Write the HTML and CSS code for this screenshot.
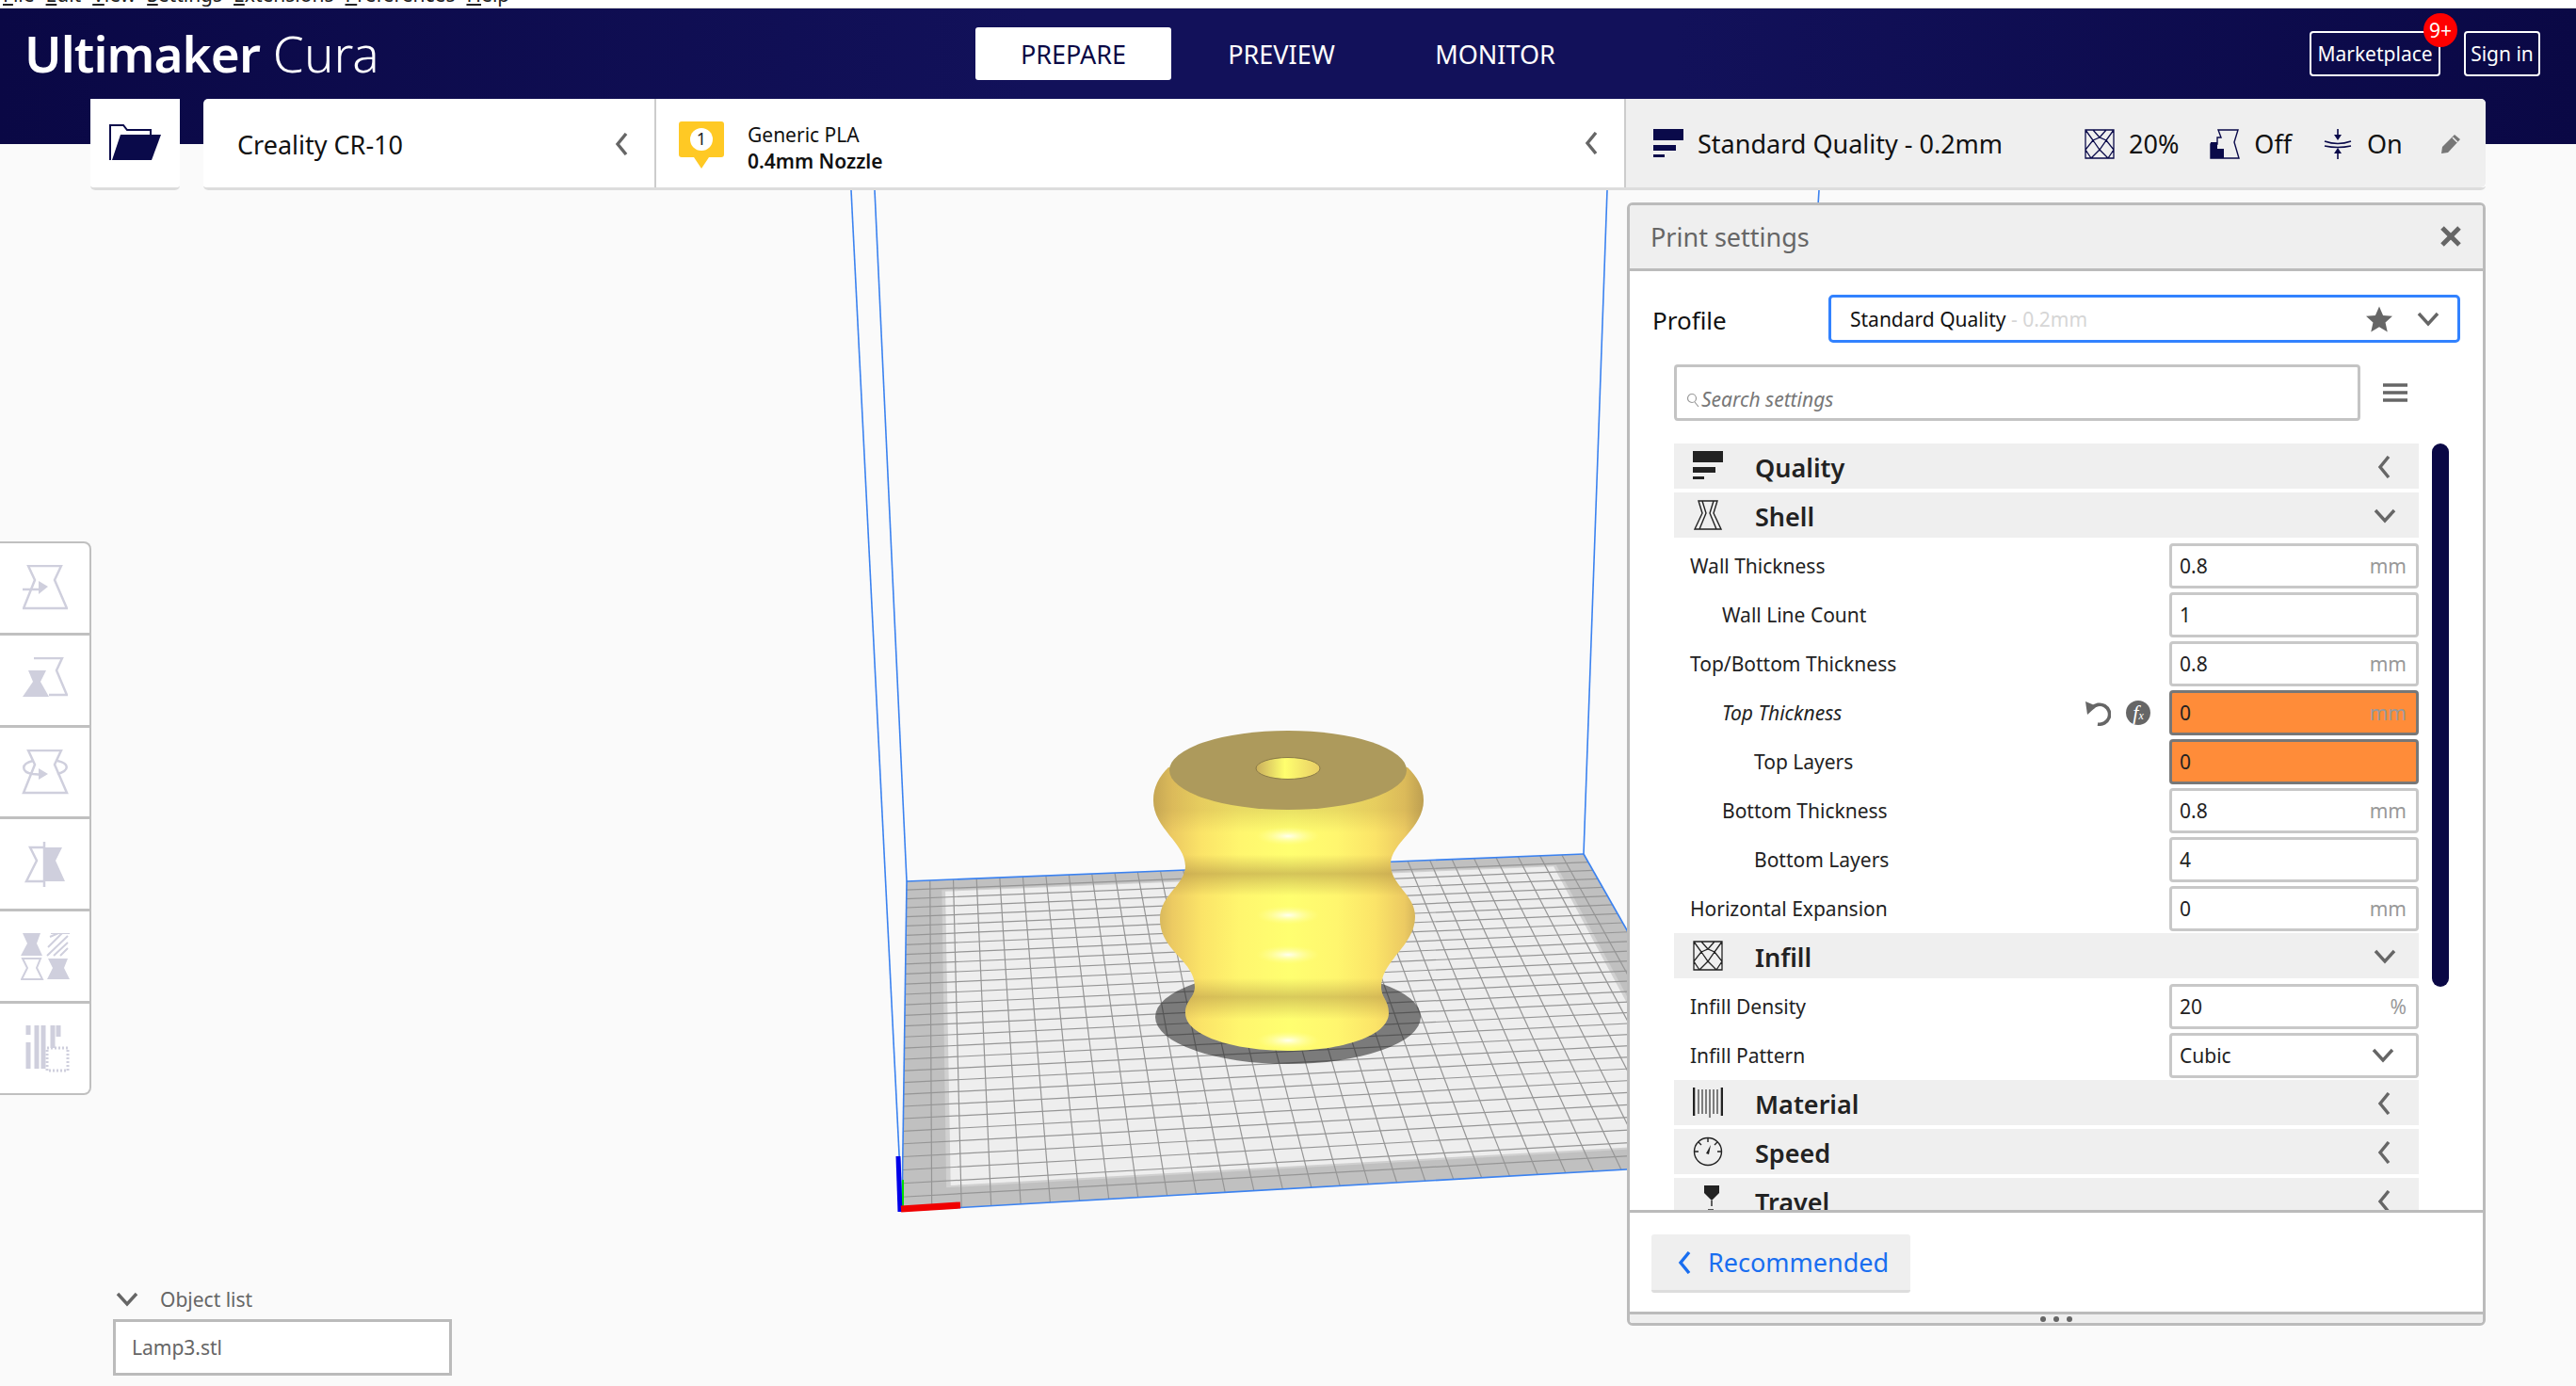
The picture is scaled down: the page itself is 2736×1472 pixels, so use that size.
FILE: index.html
```html
<!DOCTYPE html>
<html lang="en">
<head>
<meta charset="utf-8">
<title>Ultimaker Cura</title>
<link rel="stylesheet" href="styles.css">
</head>
<body>
<svg class="defs" width="0" height="0" aria-hidden="true">
  <symbol id="i-quality" viewBox="0 0 32 32"><rect x="0" y="0" width="32" height="12"/><rect x="0" y="17" width="24" height="6"/><rect x="0" y="27" width="12" height="3"/></symbol>
  <symbol id="i-shell" viewBox="0 0 32 32"><path d="M6 1H26L22 14L30 31H2L10 14Z M10 1L14 14L7 31 M22 1L18 14L25 31" fill="none" stroke="currentColor" stroke-width="1.400"/></symbol>
  <symbol id="i-infill" viewBox="0 0 32 32"><path d="M1 1H31V31H1Z M1 1L9 12L1 22L7 31 M31 1L23 12L31 22L25 31 M9 1L16 9L23 1 M9 12L16 9L23 12L16 22L9 12 M7 31L16 22L25 31" fill="none" stroke="currentColor" stroke-width="1.300"/></symbol>
  <symbol id="i-support" viewBox="0 0 32 32"><path d="M9 1H30L26 14L31 31H1V16H8V9H12Z" fill="none" stroke="currentColor" stroke-width="1.400"/><path d="M1 14H8V21H15V31H1Z"/></symbol>
  <symbol id="i-adhesion" viewBox="0 0 32 32"><path d="M16 0V9 M16 22V32 M2 13Q16 18 30 13 M2 18Q16 21 30 18" fill="none" stroke="currentColor" stroke-width="1.600"/><path d="M12 6H20L16 12Z M12 26H20L16 20Z"/></symbol>
  <symbol id="i-material" viewBox="0 0 32 32"><path d="M1 0V30 M31 0V30" fill="none" stroke="currentColor" stroke-width="2.600"/><path d="M6 2V28 M10 2V28 M14 2V28 M18 2V32 M22 2V28 M26 2V28" fill="none" stroke="currentColor" stroke-width="1.100"/></symbol>
  <symbol id="i-speed" viewBox="0 0 32 32"><circle cx="16" cy="16" r="14.500" fill="none" stroke="currentColor" stroke-width="1.400"/><path d="M16 2V6 M6 6L9 9 M26 6L23 9 M2 16H6 M26 16H30" fill="none" stroke="currentColor" stroke-width="1.400"/><path d="M19 9L17 19L14 18Z"/></symbol>
  <symbol id="i-travel" viewBox="0 0 32 32"><path d="M12 0H28V8L20 16L12 8Z"/><path d="M20 16V22" fill="none" stroke="currentColor" stroke-width="1.400"/><path d="M0 30H22 M16 26H22" fill="none" stroke="currentColor" stroke-width="1.400"/></symbol>
  <symbol id="i-left" viewBox="0 0 16 24"><path d="M13 1L4 12L13 23" fill="none" stroke="currentColor" stroke-width="3.400"/></symbol>
  <symbol id="i-down" viewBox="0 0 24 16"><path d="M2 2L12 13L22 2" fill="none" stroke="currentColor" stroke-width="3.400"/></symbol>
</svg>

<div class="menubar">
  <span class="menu-item"><u>F</u>ile</span><span class="menu-item"><u>E</u>dit</span><span class="menu-item"><u>V</u>iew</span><span class="menu-item"><u>S</u>ettings</span><span class="menu-item"><u>E</u>xtensions</span><span class="menu-item"><u>P</u>references</span><span class="menu-item"><u>H</u>elp</span>
</div>

<div class="app">
  <svg class="scene" id="scene" width="2736" height="1463" viewBox="0 9 2736 1463" aria-hidden="true">
    <defs>
      <linearGradient id="lampH" x1="0" x2="1" y1="0" y2="0">
        <stop offset="0" stop-color="#cfb05a"/><stop offset=".07" stop-color="#ecca62"/><stop offset=".18" stop-color="#fbe468"/><stop offset=".32" stop-color="#fff66e"/><stop offset=".5" stop-color="#ffff70"/><stop offset=".68" stop-color="#fff66e"/><stop offset=".82" stop-color="#fbe468"/><stop offset=".93" stop-color="#ecca62"/><stop offset="1" stop-color="#c4a656"/>
      </linearGradient>
      <linearGradient id="lampV" gradientUnits="userSpaceOnUse" x1="0" x2="0" y1="780" y2="1116">
        <stop offset=".24" stop-color="#a98a42" stop-opacity=".25"/><stop offset=".31" stop-color="#a98a42" stop-opacity="0"/><stop offset=".38" stop-color="#a98a42" stop-opacity="0"/><stop offset=".44" stop-color="#a98a42" stop-opacity=".5"/><stop offset=".51" stop-color="#a98a42" stop-opacity="0"/><stop offset=".77" stop-color="#a98a42" stop-opacity="0"/><stop offset=".83" stop-color="#a98a42" stop-opacity=".45"/><stop offset=".9" stop-color="#a98a42" stop-opacity="0"/>
      </linearGradient>
      <radialGradient id="spec"><stop offset="0" stop-color="#fffff0"/><stop offset="1" stop-color="#ffff90" stop-opacity="0"/></radialGradient>
      <linearGradient id="hole" x1="0" x2="1" y1="0" y2="0"><stop offset="0" stop-color="#c9ad5c"/><stop offset=".45" stop-color="#ffff6e"/><stop offset="1" stop-color="#e8cd66"/></linearGradient>
    </defs>
    <g id="plate"></g>
    <path class="lamp" d="M1241 815C1231 825 1225 836 1225 850C1225 880 1259 895 1259 920C1259 940 1232 950 1232 976C1232 1010 1269 1020 1269 1048C1269 1060 1259 1062 1259 1076C1259 1100 1310 1116 1368 1116C1426 1116 1475 1100 1475 1076C1475 1062 1467 1060 1467 1048C1467 1020 1503 1005 1503 973C1503 950 1477 940 1477 918C1477 895 1512 880 1512 850C1512 836 1505 825 1495 815Z"/>
    <path class="lamp-bands" d="M1241 815C1231 825 1225 836 1225 850C1225 880 1259 895 1259 920C1259 940 1232 950 1232 976C1232 1010 1269 1020 1269 1048C1269 1060 1259 1062 1259 1076C1259 1100 1310 1116 1368 1116C1426 1116 1475 1100 1475 1076C1475 1062 1467 1060 1467 1048C1467 1020 1503 1005 1503 973C1503 950 1477 940 1477 918C1477 895 1512 880 1512 850C1512 836 1505 825 1495 815Z"/>
    <ellipse class="spec" cx="1368" cy="888" rx="34" ry="10"/>
    <ellipse class="spec" cx="1368" cy="972" rx="34" ry="10"/>
    <ellipse class="spec" cx="1368" cy="1014" rx="34" ry="10"/>
    <ellipse class="spec" cx="1368" cy="1105" rx="34" ry="10"/>
    <ellipse class="lamp-top" cx="1368" cy="818" rx="126" ry="42"/>
    <ellipse class="lamp-hole" cx="1368" cy="816" rx="34" ry="11.500"/>
    <path class="axis-green" d="M959 1253V1287"/>
    <path class="axis-blue" d="M954 1228L956 1287"/>
    <path class="axis-red" d="M957 1284L1020 1280"/>
  </svg>

  <header class="topbar">
    <div class="logo"><b>Ultimaker</b> <span>Cura</span></div>
    <nav class="tabs">
      <span class="tab tab-active">PREPARE</span>
      <span class="tab tab-preview">PREVIEW</span>
      <span class="tab tab-monitor">MONITOR</span>
    </nav>
    <div class="account">
      <span class="acct-btn acct-market">Marketplace<span class="badge">9+</span></span>
      <span class="acct-btn acct-sign">Sign in</span>
    </div>
  </header>

  <div class="stagebar">
    <div class="open-btn">
      <svg width="55" height="40" viewBox="0 0 55 40"><path d="M1 38V1H15L19 6H44V11" fill="none" stroke="#0a0a4a" stroke-width="2"/><path d="M3 38H45L55 11H12Z" fill="#0a0a4a"/></svg>
    </div>
    <div class="machine">
      <div class="printer"><span>Creality CR-10</span><svg class="chev" width="16" height="24"><use href="#i-left"/></svg></div>
      <div class="material">
        <svg class="mat-pin" width="48" height="50" viewBox="0 0 48 50"><path d="M3 0H45Q48 0 48 3V35Q48 38 45 38H32L24 50L16 38H3Q0 38 0 35V3Q0 0 3 0Z" fill="#ffc924"/><circle cx="24" cy="19" r="12" fill="#fff"/><text x="24" y="25" class="pin-num">1</text></svg>
        <div class="mat-text"><div>Generic PLA</div><div class="mat-strong">0.4mm Nozzle</div></div>
        <svg class="chev chev-end" width="16" height="24"><use href="#i-left"/></svg>
      </div>
      <div class="summary">
        <svg class="navy sum-ic" width="32" height="32"><use href="#i-quality"/></svg>
        <span class="sum-title">Standard Quality - 0.2mm</span>
        <svg class="navy sum-ic" width="32" height="32"><use href="#i-infill"/></svg><span class="sum-val">20%</span>
        <svg class="navy sum-ic" width="32" height="32"><use href="#i-support"/></svg><span class="sum-val">Off</span>
        <svg class="navy sum-ic" width="32" height="32"><use href="#i-adhesion"/></svg><span class="sum-val">On</span>
        <svg class="pencil" width="22" height="22" viewBox="0 0 22 22"><path d="M15 1L21 6L8 20L1 21L2 14Z" fill="#777"/><path d="M13 4L18 9" stroke="#efefef" stroke-width="1.500"/></svg>
      </div>
    </div>
  </div>

  <div class="work">
    <div class="left-col">
      <div class="tools">
        <div class="tool"><svg class="tool-ic" width="48" height="48" viewBox="0 0 48 48"><path class="o" d="M6 1H41L34 16L47 46H1L13 16Z"/><path class="o" d="M0 26H17"/><path class="f" d="M17 17L27 23L17 31Z"/></svg></div>
        <div class="tool"><svg class="tool-ic" width="48" height="48" viewBox="0 0 48 48"><path class="o" d="M12 1H42L36 14L47 40H28"/><path class="f" d="M6 14H25L19 26L28 42H0L11 26Z"/></svg></div>
        <div class="tool"><svg class="tool-ic" width="52" height="48" viewBox="0 0 52 48"><path class="o" d="M8 1H43L36 16L49 46H3L15 16Z"/><path class="o" d="M13 12C0 15 0 24 13 26L24 27 M39 12C52 15 52 22 39 26"/><path class="f" d="M19 20L29 26L19 32Z"/></svg></div>
        <div class="tool"><svg class="tool-ic" width="44" height="48" viewBox="0 0 44 48"><path class="o" d="M22 6H6L13 20L2 42H22"/><path class="f" d="M21 6H40L33 20L43 42H21Z"/><path class="o" d="M21 0V48"/></svg></div>
        <div class="tool"><svg class="tool-ic" width="52" height="50" viewBox="0 0 52 50"><path class="f" d="M2 0H21L17 11L23 24H0L7 11Z"/><path class="o thin" d="M2 27H21L17 37L23 49H1L7 37Z"/><path class="f" d="M29 27H50L46 37L52 49H28L34 37Z"/><path class="o thin" d="M32 0L52 0 M31 4L40 0 M29 15L44 0 M28 24L50 3 M35 24L50 10 M42 24L50 16"/></svg></div>
        <div class="tool"><svg class="tool-ic" width="52" height="50" viewBox="0 0 52 50"><path class="stripe" d="M8 0V10 M8 18V46 M17 0V46 M24 0V46 M34 0V46 M40 0V12"/><rect class="dots" x="28" y="24" width="22" height="24"/></svg></div>
      </div>
      <div class="object-list">
        <div class="ol-head"><svg class="ol-chev" width="24" height="16"><use href="#i-down"/></svg><span>Object list</span></div>
        <div class="ol-box">Lamp3.stl</div>
      </div>
    </div>

    <section class="panel">
      <div class="panel-head"><span>Print settings</span><svg width="24" height="24" viewBox="0 0 24 24"><path d="M3 3L21 21M21 3L3 21" stroke="#666" stroke-width="5"/></svg></div>
      <div class="panel-body">
        <div class="profile-row">
          <span class="profile-label">Profile</span>
          <div class="combo"><span>Standard Quality</span><span class="combo-dim">&nbsp;- 0.2mm</span>
            <svg class="star" width="28" height="28" viewBox="0 0 24 24"><path d="M12 .5L15.500 8.500L24 9.300L17.600 14.900L19.500 23.500L12 19L4.500 23.500L6.400 14.900L0 9.300L8.500 8.500Z" fill="#666"/></svg>
            <svg class="icon-grey" width="24" height="16"><use href="#i-down"/></svg>
          </div>
        </div>
        <div class="search-row">
          <div class="search"><svg width="14" height="16" viewBox="0 0 14 16"><circle cx="6" cy="6" r="4.500" fill="none" stroke="#999" stroke-width="1.200"/><path d="M9 10L13 15" stroke="#999" stroke-width="1.200"/></svg><span>Search settings</span></div>
          <svg class="burger" width="26" height="20" viewBox="0 0 26 20"><path d="M0 2H26M0 10H26M0 18H26" stroke="#666" stroke-width="3.500"/></svg>
        </div>
        <div class="list-wrap">
          <div class="list">
            <div class="cat"><svg class="cat-ic" width="32" height="32"><use href="#i-quality"/></svg><span>Quality</span><svg class="cat-chev cat-left" width="16" height="24"><use href="#i-left"/></svg></div>
            <div class="cat"><svg class="cat-ic" width="32" height="32"><use href="#i-shell"/></svg><span>Shell</span><svg class="cat-chev" width="24" height="16"><use href="#i-down"/></svg></div>
            <div class="row"><label>Wall Thickness</label><div class="field"><span>0.8</span><em>mm</em></div></div>
            <div class="row lvl1"><label>Wall Line Count</label><div class="field"><span>1</span></div></div>
            <div class="row"><label>Top/Bottom Thickness</label><div class="field"><span>0.8</span><em>mm</em></div></div>
            <div class="row lvl1"><label class="ital">Top Thickness</label>
              <svg class="undo" width="28" height="27" viewBox="0 0 28 27"><path d="M8 8A10.500 10.500 0 1 1 14 25" fill="none" stroke="#666" stroke-width="3.600"/><path d="M1 1L13 6L3 15Z" fill="#666"/></svg>
              <span class="fx"><i>f</i><small>x</small></span>
              <div class="field warn"><span>0</span><em>mm</em></div></div>
            <div class="row lvl2"><label>Top Layers</label><div class="field warn"><span>0</span></div></div>
            <div class="row lvl1"><label>Bottom Thickness</label><div class="field"><span>0.8</span><em>mm</em></div></div>
            <div class="row lvl2"><label>Bottom Layers</label><div class="field"><span>4</span></div></div>
            <div class="row"><label>Horizontal Expansion</label><div class="field"><span>0</span><em>mm</em></div></div>
            <div class="cat"><svg class="cat-ic" width="32" height="32"><use href="#i-infill"/></svg><span>Infill</span><svg class="cat-chev" width="24" height="16"><use href="#i-down"/></svg></div>
            <div class="row"><label>Infill Density</label><div class="field"><span>20</span><em>%</em></div></div>
            <div class="row"><label>Infill Pattern</label><div class="field"><span>Cubic</span><svg class="field-chev" width="24" height="16"><use href="#i-down"/></svg></div></div>
            <div class="cat"><svg class="cat-ic" width="32" height="32"><use href="#i-material"/></svg><span>Material</span><svg class="cat-chev cat-left" width="16" height="24"><use href="#i-left"/></svg></div>
            <div class="cat"><svg class="cat-ic" width="32" height="32"><use href="#i-speed"/></svg><span>Speed</span><svg class="cat-chev cat-left" width="16" height="24"><use href="#i-left"/></svg></div>
            <div class="cat"><svg class="cat-ic" width="32" height="32"><use href="#i-travel"/></svg><span>Travel</span><svg class="cat-chev cat-left" width="16" height="24"><use href="#i-left"/></svg></div>
          </div>
          <div class="scrollbar"></div>
        </div>
      </div>
      <div class="panel-foot">
        <div class="rec-btn"><svg width="16" height="24"><use href="#i-left"/></svg><span>Recommended</span></div>
      </div>
      <div class="grip"><i></i><i></i><i></i></div>
    </section>
  </div>
</div>
<script src="script.js"></script>
</body>
</html>
```
FILE: styles.css
```css
* { box-sizing: border-box; }
html, body { margin: 0; padding: 0; width: 2736px; height: 1472px; overflow: hidden; background: #fafafa; font-family: "Noto Sans", sans-serif; color: #111; }
.defs { position: absolute; }
svg { display: block; flex: none; }

.menubar { height: 9px; background: #fff; border-bottom: 1px solid #ddd; overflow: hidden; display: flex; gap: 12px; padding-left: 3px; font-size: 21px; line-height: 20px; color: #222; }
.menu-item { display: block; margin-top: -16px; white-space: nowrap; }

.app { position: relative; height: 1463px; }
.scene { position: absolute; left: 0; top: 0; }
.lamp { fill: url(#lampH); }
.lamp-bands { fill: url(#lampV); }
.spec { fill: url(#spec); }
.lamp-top { fill: #ad9a5c; }
.lamp-hole { fill: url(#hole); stroke: #8a7a48; stroke-width: 1; }
.axis-blue { stroke: #0000e8; stroke-width: 5; fill: none; }
.axis-green { stroke: #00e000; stroke-width: 2; fill: none; }
.axis-red { stroke: #f00000; stroke-width: 7; fill: none; }

.topbar { position: relative; height: 144px; margin-bottom: -48px; padding: 0 38px 0 26px; display: flex; background: linear-gradient(90deg, #0a0845 0%, #12115a 40%, #12115a 65%, #0a0845 100%); color: #fff; }
.logo { width: 1010px; font-size: 53px; line-height: 58px; padding-top: 19px; white-space: nowrap; }
.logo b { font-weight: 600; letter-spacing: -.9px; }
.logo span { font-weight: 300; }
.tabs { display: flex; height: 56px; margin-top: 20px; }
.tab { display: flex; align-items: center; justify-content: center; font-size: 27px; }
.tab-active { background: #fff; color: #0a0845; width: 208px; border-radius: 3px; }
.tab-preview { width: 234px; }
.tab-monitor { width: 220px; }
.account { display: flex; gap: 25px; margin: 24px 0 0 auto; height: 48px; }
.acct-btn { position: relative; display: flex; align-items: center; justify-content: center; border: 2.500px solid #fff; border-radius: 4px; font-size: 21px; white-space: nowrap; }
.acct-market { width: 139px; }
.acct-sign { width: 81px; }
.badge { position: absolute; right: -20px; top: -21px; width: 36px; height: 36px; border-radius: 50%; background: #f00; color: #fff; display: flex; align-items: center; justify-content: center; font-size: 21px; }

.stagebar { position: relative; height: 97px; margin-left: 96px; width: 2544px; display: flex; gap: 25px; }
.open-btn { width: 95px; background: #fff; border-bottom: 3px solid #ddd; border-radius: 0 0 5px 5px; display: flex; align-items: center; justify-content: center; }
.machine { width: 2424px; display: flex; background: #fff; border-bottom: 3px solid #ddd; border-radius: 5px; }
.printer { width: 481px; padding: 2px 27px 0 36px; display: flex; align-items: center; justify-content: space-between; font-size: 27px; border-right: 2px solid #ccc; }
.chev { color: #666; }
.material { width: 1030px; padding: 0 27px 0 24px; display: flex; align-items: center; gap: 25px; font-size: 21px; line-height: 28px; border-right: 2px solid #ccc; }
.mat-pin { margin-top: 4px; }
.mat-text { padding-top: 10px; }
.pin-num { font-family: "Noto Sans", sans-serif; font-size: 18px; text-anchor: middle; fill: #222; }
.mat-strong { font-weight: 600; }
.chev-end { margin-left: auto; }
.summary { flex: 1; display: flex; align-items: center; background: #efefef; padding: 1px 26px 0 29px; font-size: 27px; border-radius: 0 5px 5px 0; }
.navy { color: #0a0a4a; fill: #0a0a4a; }
.sum-ic { margin-right: 15px; }
.sum-title { width: 411px; white-space: nowrap; }
.sum-val { margin-right: 33px; }
.sum-val:nth-last-child(2) { margin-right: 0; }
.pencil { margin-left: auto; }

.work { position: relative; height: 1270px; display: flex; justify-content: space-between; }
.left-col { width: 480px; display: flex; flex-direction: column; }
.tools { margin-top: 373px; width: 97px; height: 588px; background: #fff; border: 2px solid #c0c0c0; border-left: 0; border-radius: 0 8px 8px 0; display: flex; flex-direction: column; }
.tool { flex: 1; display: flex; align-items: center; justify-content: center; border-bottom: 3px solid #c0c0c0; }
.tool:last-child { border-bottom: 0; }
.tool-ic .o { fill: none; stroke: #cfcfdd; stroke-width: 2.500; }
.tool-ic .thin { stroke-width: 2; }
.tool-ic .f { fill: #cfcfdd; }
.tool-ic .stripe { fill: none; stroke: #cfcfdd; stroke-width: 5; }
.tool-ic .dots { fill: #fff; stroke: #cfcfdd; stroke-width: 3; stroke-dasharray: 2 2; }

.object-list { margin: 203px 0 0 120px; width: 360px; }
.ol-head { display: flex; align-items: center; height: 28px; margin-bottom: 7px; font-size: 21px; color: #666; }
.ol-chev { color: #666; margin: 0 23px 0 3px; }
.ol-box { height: 60px; background: #fff; border: 3px solid #bbb; padding: 0 0 1px 17px; display: flex; align-items: center; font-size: 21px; color: #666; }

.panel { width: 912px; height: 1193px; margin: 13px 96px 0 0; display: flex; flex-direction: column; background: #fff; border: 3px solid #bbb; border-radius: 6px; overflow: hidden; }
.panel-head { height: 70px; flex: none; background: #efefef; border-bottom: 3px solid #bbb; display: flex; align-items: center; justify-content: space-between; padding: 0 22px 1px 22px; font-size: 27px; color: #666; }
.panel-body { flex: 1; min-height: 0; display: flex; flex-direction: column; overflow: hidden; }
.profile-row { display: flex; align-items: center; height: 51px; margin-top: 25px; padding: 0 24px 0 24px; flex: none; }
.profile-label { width: 187px; font-size: 26px; padding-top: 2px; }
.combo { flex: 1; height: 51px; border: 3px solid #3282ff; border-radius: 5px; display: flex; align-items: center; padding: 0 19px 0 20px; font-size: 21px; }
.combo-dim { color: #d6d6d6; }
.star { margin-left: auto; margin-right: 26px; }
.icon-grey { color: #666; }
.search-row { display: flex; align-items: center; margin: 23px 0 0 47px; flex: none; gap: 24px; }
.search { width: 729px; height: 60px; border: 3px solid #c4c4c4; border-radius: 4px; display: flex; align-items: flex-end; gap: 2px; padding: 0 0 6px 10px; font-style: italic; font-size: 21px; color: #777; }
.search svg { margin-bottom: 5px; }
.list-wrap { flex: 1; min-height: 0; display: flex; margin: 24px 0 0 47px; overflow: hidden; }
.list { width: 791px; display: flex; flex-direction: column; flex: none; }
.cat { height: 48px; margin: 0 0 4px; flex: none; background: #efefef; display: flex; align-items: center; padding: 3px 24px 0 20px; font-size: 27px; font-weight: 600; color: #222; fill: #222; }
.cat-ic { color: #222; margin: -3px 34px 0 0; }
.cat-chev { margin-left: auto; color: #666; margin-top: -1px; }
.cat-left { margin-right: 5px; }
.row { height: 52px; flex: none; display: flex; align-items: center; padding-left: 17px; font-size: 21px; color: #222; }
.lvl1 { padding-left: 51px; }
.lvl2 { padding-left: 85px; }
.row label { white-space: nowrap; }
.ital { font-style: italic; }
.field { width: 265px; height: 48px; margin-left: auto; flex: none; border: 3px solid #c8c8c8; border-radius: 4px; display: flex; align-items: center; justify-content: space-between; padding: 0 10px 0 8px; background: #fff; }
.field em { font-style: normal; color: #999; }
.field-chev { color: #666; margin-right: 13px; }
.warn { background: #ff8c39; border-color: #777; }
.undo { margin-left: auto; }
.fx { margin: 0 0 0 16px; width: 26px; height: 26px; border-radius: 50%; background: #666; color: #fff; display: flex; align-items: center; justify-content: center; font-family: "Liberation Serif", serif; font-size: 22px; line-height: 1; }
.fx i { font-style: italic; }
.fx small { font-size: 12px; font-style: italic; margin-top: 6px; }
.fx + .field { margin-left: 20px; }
.scrollbar { width: 18px; height: 577px; margin-left: 14px; flex: none; background: #0a0845; border-radius: 9px; }

.panel-foot { height: 108px; flex: none; border-top: 3px solid #bbb; padding: 23px 0 0 23px; }
.rec-btn { width: 275px; height: 62px; background: #efefef; border-bottom: 3px solid #ddd; border-radius: 3px; display: flex; align-items: center; gap: 17px; padding-left: 27px; font-size: 27px; color: #196ef0; }
.grip { height: 12px; flex: none; background: #efefef; border-top: 3px solid #bbb; display: flex; align-items: center; justify-content: center; gap: 8px; }
.grip i { width: 6px; height: 6px; border-radius: 50%; background: #666; }
```
FILE: script.js
```js
// Projects the 300 x 300 mm build plate (30 x 30 grid) onto the viewport quad.
(function () {
  var NS = 'http://www.w3.org/2000/svg';
  var g = document.getElementById('plate');
  var c = [[963, 936], [1682, 907], [1868, 1234], [958, 1286]];

  function homography(q) {
    var x0 = q[0][0], y0 = q[0][1], x1 = q[1][0], y1 = q[1][1];
    var x2 = q[2][0], y2 = q[2][1], x3 = q[3][0], y3 = q[3][1];
    var dx1 = x1 - x2, dx2 = x3 - x2, sx = x0 - x1 + x2 - x3;
    var dy1 = y1 - y2, dy2 = y3 - y2, sy = y0 - y1 + y2 - y3;
    var d = dx1 * dy2 - dx2 * dy1;
    var a = (sx * dy2 - dx2 * sy) / d, b = (dx1 * sy - sx * dy1) / d;
    return function (u, v) {
      var w = a * u + b * v + 1;
      return [((x1 - x0 + a * x1) * u + (x3 - x0 + b * x3) * v + x0) / w,
              ((y1 - y0 + a * y1) * u + (y3 - y0 + b * y3) * v + y0) / w];
    };
  }
  var P = homography(c);

  function add(tag, attrs) {
    var e = document.createElementNS(NS, tag);
    for (var k in attrs) e.setAttribute(k, attrs[k]);
    g.appendChild(e);
    return e;
  }
  function quad(u0, v0, u1, v1, fill) {
    var pts = [P(u0, v0), P(u1, v0), P(u1, v1), P(u0, v1)].map(function (p) { return p.join(','); }).join(' ');
    add('polygon', { points: pts, fill: fill });
  }
  function line(a, b, stroke, w) {
    add('line', { x1: a[0], y1: a[1], x2: b[0], y2: b[1], stroke: stroke, 'stroke-width': w });
  }

  quad(0, 0, 1, 1, '#c0c0c0');
  quad(0.05, 0.04, 0.95, 0.95, '#d0d0d0');
  quad(0.055, 0.045, 0.945, 0.945, '#eeeeee');

  for (var i = 1; i < 30; i++) {
    var t = i / 30;
    line(P(t, 0), P(t, 1), '#959595', 1.2);
    line(P(0, t), P(1, t), '#959595', 1.2);
  }

  // Shadow of the model on the plate
  add('ellipse', { cx: 1368, cy: 1080, rx: 141, ry: 50, fill: 'rgba(40,40,40,.58)' });

  // Build volume outline
  var blue = '#3b82f0';
  [[[963, 936], [1682, 907]], [[1682, 907], [1868, 1234]], [[1868, 1234], [958, 1286]], [[958, 1286], [963, 936]],
   [[904, 202], [958, 1286]], [[929, 202], [963, 936]], [[1707, 202], [1682, 907]], [[1932, 202], [1868, 1234]]]
    .forEach(function (s) { line(s[0], s[1], blue, 1.6); });
})();
```
